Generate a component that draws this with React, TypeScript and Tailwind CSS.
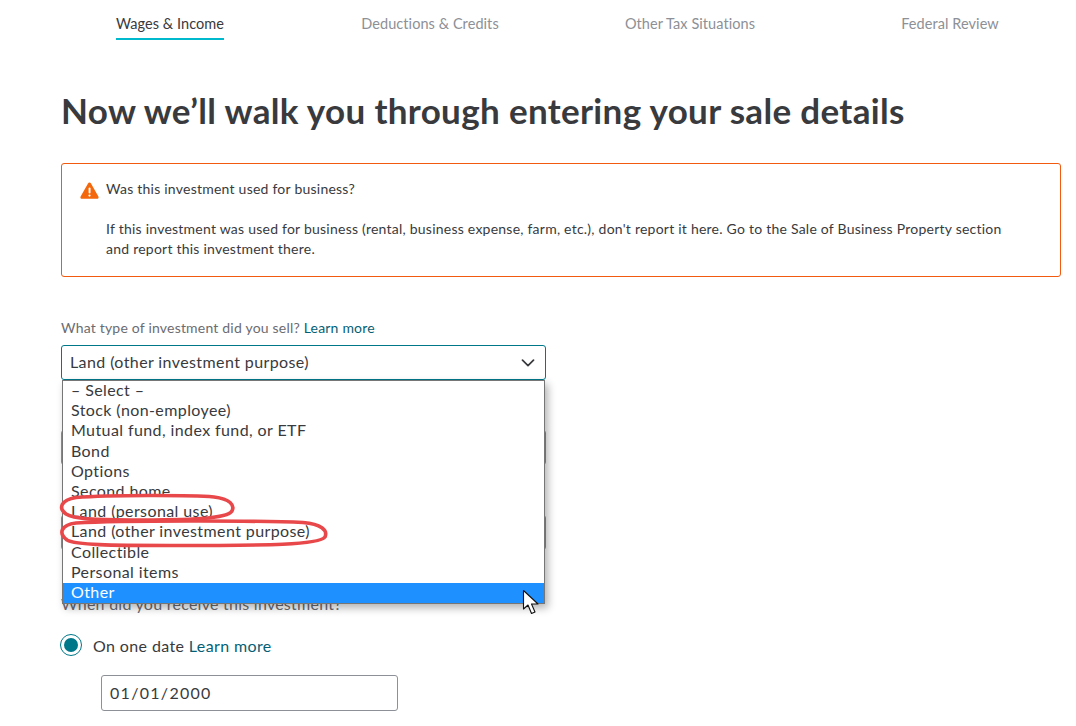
import React from "react";

const font = { fontFamily: '"Lato", "Liberation Sans", sans-serif' };

const options = [
  "– Select –",
  "Stock (non-employee)",
  "Mutual fund, index fund, or ETF",
  "Bond",
  "Options",
  "Second home",
  "Land (personal use)",
  "Land (other investment purpose)",
  "Collectible",
  "Personal items",
];

const tabs = ["Wages & Income", "Deductions & Credits", "Other Tax Situations", "Federal Review"];

export default function App() {
  return (
    <div style={font} className="relative w-[1076px] h-[726px] overflow-hidden bg-white text-[#393a3d] font-['Lato',sans-serif]">
      <nav className="grid grid-cols-[repeat(4,260px)] pl-[40px] pt-[15px] h-[40px] justify-items-center">
        {tabs.map((t, i) => (
          <div
            key={t}
            className={
              i === 0
                ? "h-[25px] text-[14.5px] tracking-[0.07px] leading-[18px] border-b-2 border-[#00b9cc] text-[#393a3d]"
                : "h-[25px] text-[14.5px] tracking-[0.07px] leading-[18px] text-[#8d9096]"
            }
          >
            {t}
          </div>
        ))}
      </nav>

      <main className="pl-[61px] pr-[15px]">
        <h1 className="mt-[48px] text-[35px] leading-[44px] font-bold text-[#393a3d] tracking-[0.33px]">
          Now we’ll walk you through entering your sale details
        </h1>

        <section className="mt-[31px] h-[114px] rounded-[3px] border border-[#f25a0f] pl-[18px] pr-[40px] pt-[15px] flex gap-[7px]">
          <svg width="19" height="17" viewBox="0 0 19 17" className="mt-[3px] shrink-0">
            <path d="M9.5 0.5 C10.2 0.5 10.7 0.9 11 1.5 L18.4 14.4 C19 15.6 18.3 16.8 17 16.8 L2 16.8 C0.7 16.8 0 15.6 0.6 14.4 L8 1.5 C8.3 0.9 8.8 0.5 9.5 0.5 Z" fill="#f4680b" />
            <rect x="8.6" y="5.5" width="1.9" height="6" rx="0.9" fill="#fff" />
            <circle cx="9.5" cy="13.6" r="1.1" fill="#fff" />
          </svg>
          <div className="text-[14px] tracking-[0.235px] leading-[20px] text-[#393a3d]">
            <p>Was this investment used for business?</p>
            <p className="mt-[20px]">
              If this investment was used for business (rental, business expense, farm, etc.), don't report it here. Go to the Sale of Business Property section and report this investment there.
            </p>
          </div>
        </section>

        <div className="mt-[42px] text-[14px] tracking-[0.2px] leading-[18px] text-[#6b6c72]">
          What type of investment did you sell? <span className="text-[#055f74]">Learn more</span>
        </div>

        <div className="mt-[8px] w-[485px] h-[35px] rounded-[3px] border border-[#00788a] flex items-center justify-between pl-[8px] pr-[10px] text-[16px] tracking-[0.4px] text-[#393a3d]">
          <span className="leading-[20px] mb-[1px]">Land (other investment purpose)</span>
          <svg width="14" height="8" viewBox="0 0 14 8" fill="none" stroke="#393a3d" strokeWidth="1.7" strokeLinecap="round" strokeLinejoin="round">
            <path d="M1.5 1.2 L7 6.6 L12.5 1.2" />
          </svg>
        </div>

        <div className="mt-[50px] w-[485px] h-[35px] rounded-[3px] border border-[#8d9096]" />
        <div className="mt-[50px] w-[485px] h-[35px] rounded-[3px] border border-[#8d9096]" />

        <div className="mt-[45px] text-[16px] tracking-[0.25px] leading-[18px] text-[#6b6c72]">When did you receive this investment?</div>

        <div className="mt-[21px] -ml-[1px] flex items-center">
          <span className="w-[22px] h-[22px] rounded-full border border-[#00788a] flex items-center justify-center">
            <span className="w-[14px] h-[14px] rounded-full bg-[#00788a]" />
          </span>
          <span className="ml-[11px] mt-[2px] text-[16px] tracking-[0.38px] leading-[20px] text-[#393a3d]">
            On one date <span className="text-[#055f74]">Learn more</span>
          </span>
        </div>

        <div className="mt-[19px] ml-[40px] w-[297px] h-[36px] rounded-[3px] border border-[#8d9096] flex items-center pl-[8px] text-[16px] tracking-[1.3px] text-[#393a3d]">
          01/01/2000
        </div>
      </main>

      {/* open native select list */}
      <div className="absolute left-[62px] top-[380px] w-[483px] h-[224px] bg-white border border-[#767676] shadow-[3px_4px_8px_rgba(0,0,0,0.3)] pb-[1px]">
        {options.map((o) => (
          <div key={o} className="h-[20.2px] pl-[8px] text-[16px] tracking-[0.4px] leading-[18px] text-[#393a3d] whitespace-nowrap">
            {o}
          </div>
        ))}
        <div className="h-[20.2px] pl-[8px] text-[16px] tracking-[0.4px] leading-[18px] bg-[#1e90ff] text-white">Other</div>
      </div>

      {/* red hand-drawn annotations */}
      <svg className="absolute left-0 top-0 pointer-events-none" width="1076" height="726" fill="none" stroke="#e8484a" strokeWidth="3.6">
        <path d="M76 497.5 C110 495 190 495 214 497 C230 499 235 505 232 511 C227 519 190 520 130 520 C95 520 74 519 66 514 C58 508 61 500 76 497.5 Z" />
        <path d="M76 523 C120 520.5 260 520.5 303 522.5 C321 524 328 530 325 537 C319 545 270 545.5 170 545.5 C110 545.5 76 545 67 540 C58 533 61 525 76 523 Z" />
      </svg>

      {/* mouse pointer */}
      <svg className="absolute left-[522px] top-[589px]" width="20" height="27" viewBox="0 0 20 27">
        <path d="M1.5 1.5 L1.5 20 L6 16 L9.5 24.5 L13 23 L9.5 15 L16 15 Z" fill="#fff" stroke="#111" strokeWidth="1.1" strokeLinejoin="round" />
      </svg>
    </div>
  );
}
